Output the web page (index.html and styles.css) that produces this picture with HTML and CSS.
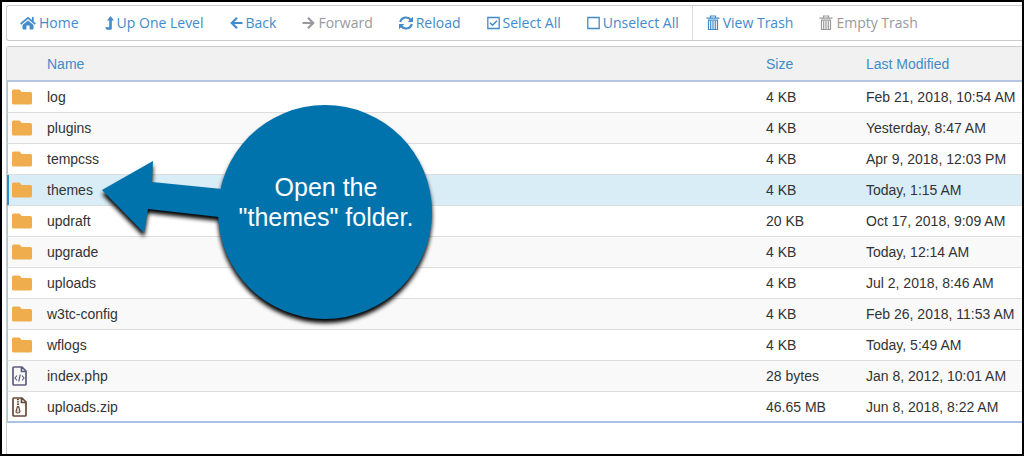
FILE: index.html
```html
<!DOCTYPE html>
<html lang="en">
<head>
<meta charset="utf-8">
<title>File Manager</title>
<link rel="stylesheet" href="styles.css">
</head>
<body>
<svg class="sprite" aria-hidden="true">
  <symbol id="folder" viewBox="0 0 20 16"><path d="M0 2Q0 .5 1.500 .5H7Q8 .5 8.500 1.500L9.500 3H18.500Q20 3 20 4.500V14Q20 15.500 18.500 15.500H1.500Q0 15.500 0 14Z"/></symbol>
  <symbol id="trash" viewBox="0 0 14 16"><path fill="none" stroke="currentColor" stroke-width="1.200" d="M.5 3.200H13.500M4.500 3V1H9.500V3M2 5.200H12M2.500 5V14.500H11.500V5M4.700 6V14M7 6V14M9.300 6V14"/></symbol>
</svg>
<main class="frame">
  <nav class="toolbar" aria-label="File actions">
    <button class="tool"><svg class="icon wide" viewBox="0 0 16 14"><path d="M8 4.500L13.500 9V12.500Q13.500 13.500 12.500 13.500H9.600V9.500H6.400V13.500H3.500Q2.500 13.500 2.500 12.500V9Z"/><path fill="none" stroke="currentColor" stroke-width="1.700" d="M.7 8L8 1.800L15.300 8M12.800 1V5.500"/></svg>Home</button>
    <button class="tool"><svg class="icon slim" viewBox="0 0 9 14"><path d="M5.500 0L9 4.500H6.800V12.500Q6.800 13.700 5.600 13.700H1.700L0 11.300H4.200V4.500H2Z"/></svg>Up One Level</button>
    <button class="tool"><svg class="icon" viewBox="0 0 13 14"><path class="stroke" d="M12.500 7H2M7 1.800L1.800 7L7 12.200"/></svg>Back</button>
    <button class="tool" disabled><svg class="icon" viewBox="0 0 13 14"><path class="stroke" d="M.5 7H11M6 1.800L11.200 7L6 12.200"/></svg>Forward</button>
    <button class="tool"><svg class="icon mid" viewBox="0 0 14 14"><path class="stroke" d="M1.200 6Q2.500 1.500 7 1.500Q10 1.500 12 4M12.800 8Q11.500 12.500 7 12.500Q4 12.500 2 10"/><path d="M14 .7V6H8.700ZM0 13.300V8H5.300Z"/></svg>Reload</button>
    <button class="tool"><svg class="icon" viewBox="0 0 13 14"><path fill="none" stroke="currentColor" stroke-width="1.300" d="M.8 1.500H12.200V12.500H.8Z"/><path fill="none" stroke="currentColor" stroke-width="1.600" d="M3 6.700L5.500 9.200L10 4.700"/></svg>Select All</button>
    <button class="tool"><svg class="icon" viewBox="0 0 13 14"><path fill="none" stroke="currentColor" stroke-width="1.300" d="M.8 1.500H12.200V12.500H.8Z"/></svg>Unselect All</button>
    <span class="divider"></span>
    <button class="tool"><svg class="icon bin"><use href="#trash"/></svg>View Trash</button>
    <button class="tool" disabled><svg class="icon bin"><use href="#trash"/></svg>Empty Trash</button>
  </nav>
  <section class="panel">
    <table class="files">
      <thead>
        <tr><th class="type"></th><th>Name</th><th class="size">Size</th><th class="date">Last Modified</th></tr>
      </thead>
      <tbody>
        <tr><td><svg class="folder"><use href="#folder"/></svg></td><td>log</td><td>4 KB</td><td>Feb 21, 2018, 10:54 AM</td></tr>
        <tr><td><svg class="folder"><use href="#folder"/></svg></td><td>plugins</td><td>4 KB</td><td>Yesterday, 8:47 AM</td></tr>
        <tr><td><svg class="folder"><use href="#folder"/></svg></td><td>tempcss</td><td>4 KB</td><td>Apr 9, 2018, 12:03 PM</td></tr>
        <tr class="selected"><td><svg class="folder"><use href="#folder"/></svg></td><td>themes</td><td>4 KB</td><td>Today, 1:15 AM</td></tr>
        <tr><td><svg class="folder"><use href="#folder"/></svg></td><td>updraft</td><td>20 KB</td><td>Oct 17, 2018, 9:09 AM</td></tr>
        <tr><td><svg class="folder"><use href="#folder"/></svg></td><td>upgrade</td><td>4 KB</td><td>Today, 12:14 AM</td></tr>
        <tr><td><svg class="folder"><use href="#folder"/></svg></td><td>uploads</td><td>4 KB</td><td>Jul 2, 2018, 8:46 AM</td></tr>
        <tr><td><svg class="folder"><use href="#folder"/></svg></td><td>w3tc-config</td><td>4 KB</td><td>Feb 26, 2018, 11:53 AM</td></tr>
        <tr><td><svg class="folder"><use href="#folder"/></svg></td><td>wflogs</td><td>4 KB</td><td>Today, 5:49 AM</td></tr>
        <tr><td><svg class="doc code" viewBox="0 0 15 20"><path d="M1 2Q1 1 2 1H10L14 5V18Q14 19 13 19H2Q1 19 1 18ZM9.500 1V5.500H14" stroke-width="1.700"/><path d="M5 9.500L3 12L5 14.500M10 9.500L12 12L10 14.500M8.300 8.500L6.700 15.500" stroke-width="1.200"/></svg></td><td>index.php</td><td>28 bytes</td><td>Jan 8, 2012, 10:01 AM</td></tr>
        <tr><td><svg class="doc zip" viewBox="0 0 15 20"><path d="M1 2Q1 1 2 1H10L14 5V18Q14 19 13 19H2Q1 19 1 18ZM9.500 1V5.500H14" stroke-width="1.700"/><path d="M6 2V10" stroke-width="2.200" stroke-dasharray="1.300 1"/><path d="M5.300 10H6.800L8 14.500Q8 16 6 16T4 14.500ZM5.500 14H6.500" stroke-width="1.200"/></svg></td><td>uploads.zip</td><td>46.65 MB</td><td>Jun 8, 2018, 8:22 AM</td></tr>
      </tbody>
    </table>
  </section>
  <aside class="callout">
    <svg class="shape" viewBox="0 0 340 230" aria-hidden="true"><path d="M2 92L53 63L52 84L122 91L119 119L48 111L44 135Z"/><circle cx="225" cy="114" r="107"/></svg>
    <p class="message">Open the<br>"themes" folder.</p>
  </aside>
</main>
</body>
</html>
```
FILE: styles.css
```css
* {
  box-sizing: border-box;
}

body {
  margin: 0;
  background: #fff;
  color: #333;
  font: 14px/20px "Liberation Sans", Arial, sans-serif;
}

.sprite {
  position: absolute;
  width: 0;
  height: 0;
}

.frame {
  position: relative;
  display: flex;
  flex-direction: column;
  gap: 5px;
  min-height: 100vh;
  padding: 3px 0 0 4px;
  border: 2px solid #000;
  overflow: hidden;
}

.toolbar {
  display: flex;
  height: 36px;
  border: 1px solid #ccc;
  border-right: 0;
  border-radius: 3px 0 0 3px;
}

.tool {
  display: flex;
  align-items: center;
  gap: 3px;
  padding: 0 13px;
  border: 0;
  background: none;
  color: #428bca;
  font: 14px/20px "Open Sans", sans-serif;
  white-space: nowrap;
}

.tool:disabled {
  color: #999;
}

.divider {
  width: 1px;
  background: #ddd;
}

.icon {
  flex: none;
  width: 13px;
  height: 14px;
  fill: currentColor;
}

.icon.wide {
  width: 16px;
}

.icon.mid {
  width: 14px;
}

.icon.slim {
  width: 9px;
}

.icon.bin {
  width: 14px;
  height: 16px;
}

.stroke {
  fill: none;
  stroke: currentColor;
  stroke-width: 2.2;
}

.panel {
  flex: 1;
  border: 1px solid #ccc;
  border-width: 1px 0 0 1px;
  border-radius: 3px 0 0 0;
}

.files {
  width: 100%;
  border-collapse: separate;
  border-spacing: 0;
  table-layout: fixed;
}

.files th {
  height: 35px;
  padding: 0;
  border-bottom: 2px solid #b3c6e2;
  background: #f1f1f1;
  color: #428bca;
  font-weight: normal;
  text-align: left;
}

.files .type {
  width: 40px;
}

.files .size {
  width: 100px;
}

.files .date {
  width: 156px;
}

.files td {
  height: 31px;
  padding: 0;
  border-bottom: 1px solid #ddd;
  white-space: nowrap;
}

.files td:first-child {
  padding-left: 4px;
  border-left: 1px solid #aac4e8;
}

.files tr:nth-child(even) td {
  background: #f9f9f9;
}

.files tbody .selected td {
  background: #d9edf7;
}

.files .selected td:first-child {
  box-shadow: inset 1px 0 #2a8fcb;
  border-left-color: #2a8fcb;
}

.files tr:last-child td {
  border-bottom: 2px solid #a9c3e8;
}

.folder,
.doc {
  display: block;
}

.folder {
  width: 20px;
  height: 16px;
  fill: #f0ad4e;
}

.doc {
  width: 15px;
  height: 20px;
  fill: none;
  stroke: currentColor;
}

.code {
  color: #5d5d80;
}

.zip {
  color: #654a38;
}

.callout {
  position: absolute;
  top: 96px;
  left: 98px;
  width: 340px;
  height: 230px;
}

.shape {
  display: block;
  width: 100%;
  fill: #0073ad;
  filter: drop-shadow(0 4px 2px #000);
}

.message {
  position: absolute;
  top: 74px;
  left: 119px;
  width: 214px;
  margin: 0;
  color: #fff;
  font-size: 25px;
  line-height: 30px;
  text-align: center;
}
```
